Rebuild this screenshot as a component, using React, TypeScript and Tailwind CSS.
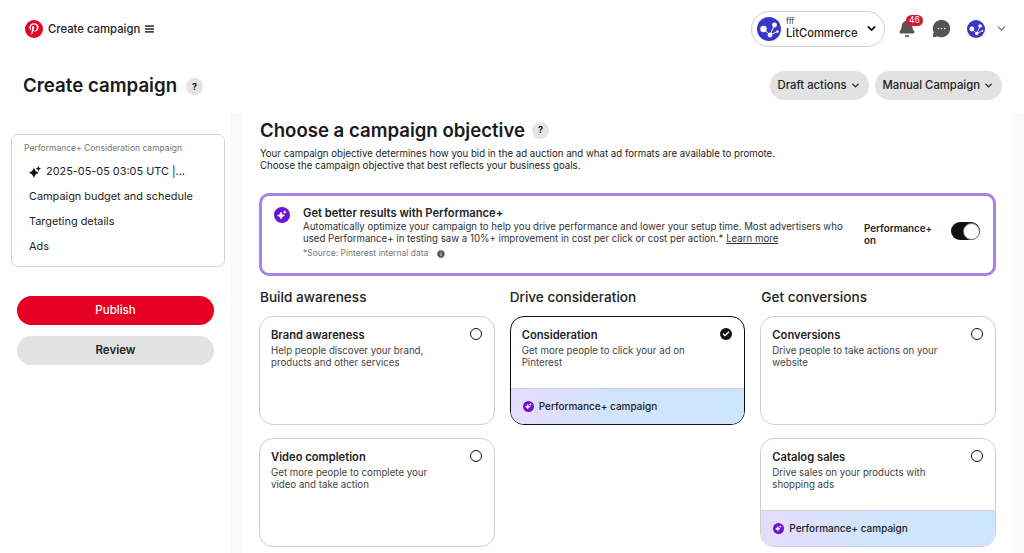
import { Bell, ChevronDown, MessageCircleMore, Check, Info } from "lucide-react";

const inter = "font-['Inter',sans-serif]";

function Sparkle({ className }: { className?: string }) {
  return (
    <svg viewBox="0 0 16 16" className={className} fill="currentColor">
      <path d="M6.500 2.500 8.800 6.700 13 9 8.800 11.300 6.500 15.500 4.200 11.300 0 9 4.200 6.700z" />
      <path d="M12.500 0 13.600 2.400 16 3.500 13.600 4.600 12.500 7 11.400 4.600 9 3.500 11.400 2.400z" />
    </svg>
  );
}

function PlusBadge({ size }: { size: string }) {
  return (
    <span className={`${size} flex shrink-0 items-center justify-center rounded-full bg-[#6b14d6] text-white`}>
      <Sparkle className="h-[62%] w-[62%]" />
    </span>
  );
}

function Account({ className }: { className: string }) {
  return (
    <svg viewBox="0 0 24 24" className={className}>
      <circle cx="12" cy="12" r="12" fill="#3b35c9" />
      <path d="M6.500 12 13 18 17.500 8M13 18 20.500 14.500" fill="none" stroke="#fff" strokeWidth="1" />
      <circle cx="6.500" cy="12" r="3.200" fill="#fff" />
      <circle cx="13" cy="18" r="2.400" fill="#fff" />
      <circle cx="17.500" cy="8" r="2.400" fill="#fff" />
      <circle cx="20.500" cy="14.500" r="1.200" fill="#fff" />
    </svg>
  );
}

function PinterestLogo() {
  return (
    <svg viewBox="0 0 24 24" className="h-[18px] w-[18px]">
      <circle cx="12" cy="12" r="12" fill="#e60023" />
      <path
        fill="#fff"
        d="M12.200 4.300c-4.200 0-6.400 2.800-6.400 5.800 0 1.400.8 3.200 2 3.700.2.100.3 0 .4-.2l.3-1c0-.1 0-.2-.1-.4-.4-.5-.7-1.300-.7-2.100 0-2 1.500-4 4.200-4 2.300 0 3.900 1.600 3.900 3.800 0 2.500-1.300 4.300-2.900 4.300-.9 0-1.600-.8-1.400-1.700.3-1.100.8-2.300.8-3.100 0-.7-.4-1.300-1.200-1.300-.9 0-1.700 1-1.700 2.300 0 .8.300 1.400.3 1.400l-1.100 4.700c-.3 1.100 0 2.800 0 3 0 .1.200.1.200.1.100-.2 1.300-1.800 1.600-3l.6-2.300c.3.600 1.200 1.100 2.200 1.100 2.900 0 4.900-2.600 4.900-6 0-2.900-2.500-5.100-5.800-5.100z"
      />
    </svg>
  );
}

function HelpDot({ className }: { className: string }) {
  return (
    <span className={`${className} flex shrink-0 items-center justify-center rounded-full bg-[#e4e4e4] font-bold text-[#111]`}>
      ?
    </span>
  );
}

function PillButton({ label }: { label: string }) {
  return (
    <button className="flex h-[29px] items-center gap-[3px] rounded-full bg-[#e2e2e2] px-[8px] text-[11.300px] font-medium text-[#222]">
      {label}
      <ChevronDown size={11} strokeWidth={3} />
    </button>
  );
}

function ObjectiveCard({
  title,
  text,
  selected,
  plus,
}: {
  title: string;
  text: string;
  selected?: boolean;
  plus?: boolean;
}) {
  return (
    <div
      className={`flex h-[109px] flex-col overflow-hidden rounded-[14px] bg-white ${
        selected ? "border-[1.500px] border-[#111]" : "border border-[#cfcfcf]"
      }`}
    >
      <div className="relative flex-1 px-[11px] pt-[10px]">
        <p className="text-[11.200px] leading-[16px] font-semibold text-[#222]">{title}</p>
        <p className="mt-[2px] w-[180px] text-[9.700px] leading-[12px] text-[#444]">{text}</p>
        {selected ? (
          <span className="absolute top-[11px] right-[12px] flex h-[12px] w-[12px] items-center justify-center rounded-full bg-[#111] text-white">
            <Check size={8} strokeWidth={4} />
          </span>
        ) : (
          <span className="absolute top-[11px] right-[12px] h-[12px] w-[12px] rounded-full border-[1.500px] border-[#111]" />
        )}
      </div>
      {plus && (
        <div className="flex h-[36px] shrink-0 items-center gap-[5px] border-t border-[#cfcfcf] bg-gradient-to-r from-[#e6dcfb] via-[#cfe5fd] to-[#cde5fd] px-[12px]">
          <PlusBadge size="h-[11px] w-[11px]" />
          <span className="text-[10px] font-medium text-[#222]">Performance+ campaign</span>
        </div>
      )}
    </div>
  );
}

export default function App() {
  return (
    <div className={`${inter} flex h-[553px] w-[1024px] flex-col overflow-hidden bg-white text-[#111]`}>
      {/* top bar */}
      <header className="flex h-[57px] shrink-0 items-center justify-between pr-[16px] pl-[25px]">
        <div className="flex items-center gap-[5px] pt-[1px]">
          <PinterestLogo />
          <span className="text-[11.300px] font-medium text-[#222]">Create campaign</span>
          <svg viewBox="0 0 10 8" className="h-[8px] w-[9px]" fill="#222">
            <rect width="10" height="1.600" />
            <rect y="3.200" width="10" height="1.600" />
            <rect y="6.400" width="10" height="1.600" />
          </svg>
        </div>
        <div className="flex items-center">
          <div className="flex h-[36px] w-[134px] items-center rounded-full border border-[#cfcfcf] pl-[5px]">
            <Account className="h-[24px] w-[24px]" />
            <div className="ml-[5px] flex flex-col">
              <span className="text-[8px] leading-[9px] text-[#333]">fff</span>
              <span className="text-[11.200px] leading-[14px] font-medium text-[#222]">LitCommerce</span>
            </div>
            <ChevronDown size={13} strokeWidth={3} className="ml-[7px]" />
          </div>
          <div className="relative ml-[13px]">
            <Bell size={18} fill="#555" stroke="#555" />
            <span className="absolute -top-[5px] left-[8px] rounded-full bg-[#d6152f] px-[3px] text-[8.500px] leading-[11px] text-white">
              46
            </span>
          </div>
          <MessageCircleMore size={19} fill="#555" stroke="#555" className="ml-[16px] [&>path:not(:first-child)]:stroke-white" />
          <Account className="ml-[16px] h-[18px] w-[18px]" />
          <ChevronDown size={13} strokeWidth={2} className="ml-[10px] text-[#666]" />
        </div>
      </header>

      {/* title row */}
      <div className="flex h-[56px] shrink-0 items-center justify-between pr-[22px] pl-[23px]">
        <div className="flex items-center gap-[9px] pt-[3px]">
          <h1 className="text-[18.700px] font-semibold text-[#1a1a1a]">Create campaign</h1>
          <HelpDot className="h-[17px] w-[17px] text-[9px]" />
        </div>
        <div className="flex gap-[6px] pt-[1px]">
          <PillButton label="Draft actions" />
          <PillButton label="Manual Campaign" />
        </div>
      </div>

      <div className="flex min-h-0 flex-1 bg-[#f9f9f9]">
        {/* sidebar */}
        <aside className="w-[231px] shrink-0 bg-white pt-[21px] pr-[6px] pl-[11px]">
          <div className="h-[133px] rounded-[7px] border border-[#d4d4d4] px-[12px] pt-[8px]">
            <p className="-mt-[0.500px] text-[8.500px] leading-[11px] text-[#777]">
              Performance+ Consideration campaign
            </p>
            <div className="mt-[6px] ml-[5px] flex h-[24px] items-center gap-[5px]">
              <Sparkle className="h-[12px] w-[12px]" />
              <span className="text-[10.900px] text-[#222]">2025-05-05 03:05 UTC |...</span>
            </div>
            <div className="ml-[5px] flex flex-col text-[10.900px] text-[#222]">
              <span className="leading-[25px]">Campaign budget and schedule</span>
              <span className="leading-[25px]">Targeting details</span>
              <span className="leading-[25px]">Ads</span>
            </div>
          </div>
          <div className="mt-[29px] box-content flex w-[197px] flex-col gap-[11px] pl-[6px]">
            <button className="h-[29px] rounded-full bg-[#e60023] text-[11.500px] font-medium text-white">
              Publish
            </button>
            <button className="h-[29px] rounded-full bg-[#e2e2e2] text-[11.500px] font-semibold text-[#222]">
              Review
            </button>
          </div>
        </aside>

        {/* main panel */}
        <main className="ml-[12px] w-[769px] shrink-0 bg-white pr-[16px] pl-[16px]">
          <div className="flex items-center gap-[7px] pt-[4px] pl-[1px]">
            <h2 className="text-[18.600px] leading-[26px] font-semibold text-[#1a1a1a]">Choose a campaign objective</h2>
            <HelpDot className="h-[17px] w-[17px] text-[9px]" />
          </div>
          <p className="mt-[5px] pl-[1px] text-[9.670px] leading-[12px] text-[#222]">
            Your campaign objective determines how you bid in the ad auction and what ad formats are available to promote.
            <br />
            Choose the campaign objective that best reflects your business goals.
          </p>

          <div className="mt-[21px] flex h-[83px] items-start rounded-[10px] border-[3px] border-[#a583e8] pt-[10px] pr-[13px] pl-[12px]">
            <PlusBadge size="mt-[1px] h-[16px] w-[16px]" />
            <div className="ml-[13px] w-[545px] shrink-0">
              <p className="text-[11.200px] leading-[15px] font-semibold text-[#222]">Get better results with Performance+</p>
              <p className="text-[9.670px] leading-[12px] text-[#333]">
                Automatically optimize your campaign to help you drive performance and lower your setup time. Most advertisers who
                used Performance+ in testing saw a 10%+ improvement in cost per click or cost per action.*{" "}
                <span className="underline">Learn more</span>
              </p>
              <p className="mt-[3px] flex items-center gap-[8px] text-[8.500px] leading-[11px] text-[#777]">
                *Source: Pinterest internal data
                <Info size={10} fill="#555" stroke="#fff" />
              </p>
            </div>
            <p className="mt-[17px] ml-[16px] w-[76px] shrink-0 text-[9.800px] leading-[12px] font-semibold text-[#222]">Performance+ on</p>
            <div className="mt-[16px] ml-[11px] flex h-[18px] w-[29px] shrink-0 items-center justify-end rounded-full bg-[#111]">
              <span className="h-[17px] w-[17px] rounded-full border border-[#777] bg-white" />
            </div>
          </div>

          <div className="mt-[11px] grid grid-cols-3 gap-x-[15px]">
            <div className="flex flex-col">
              <h3 className="mb-[9px] pl-[1px] text-[13.600px] leading-[20px] font-medium text-[#222]">Build awareness</h3>
              <ObjectiveCard title="Brand awareness" text="Help people discover your brand, products and other services" />
              <div className="mt-[13px]">
                <ObjectiveCard title="Video completion" text="Get more people to complete your video and take action" />
              </div>
            </div>
            <div className="flex flex-col">
              <h3 className="mb-[9px] text-[13.600px] leading-[20px] font-medium text-[#222]">Drive consideration</h3>
              <ObjectiveCard title="Consideration" text="Get more people to click your ad on Pinterest" selected plus />
            </div>
            <div className="flex flex-col">
              <h3 className="mb-[9px] pl-[1px] text-[13.600px] leading-[20px] font-medium text-[#222]">Get conversions</h3>
              <ObjectiveCard title="Conversions" text="Drive people to take actions on your website" />
              <div className="mt-[13px]">
                <ObjectiveCard title="Catalog sales" text="Drive sales on your products with shopping ads" plus />
              </div>
            </div>
          </div>
        </main>
      </div>
    </div>
  );
}
